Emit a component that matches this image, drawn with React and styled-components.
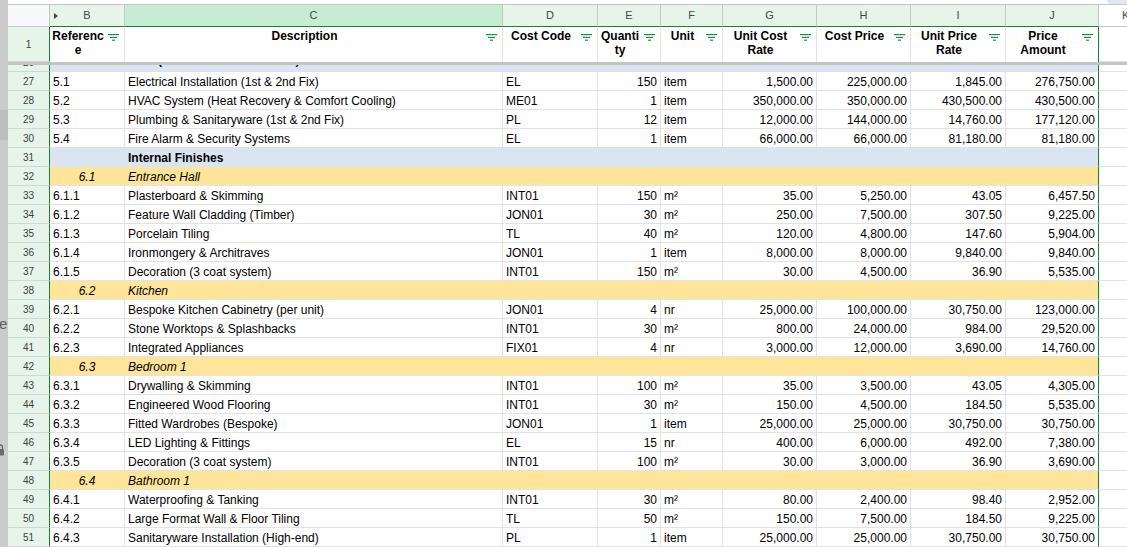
import React from 'react';
import styled, { createGlobalStyle } from 'styled-components';

const GlobalStyle = createGlobalStyle`
  html, body { margin: 0; padding: 0; background: #fff; overflow: hidden; }
  body { font-family: "Liberation Sans", Arial, sans-serif; }
  * { box-sizing: border-box; }
`;

const COLS = '42px 75px 378px 95px 63px 62px 94px 94px 95px 93px minmax(0, 1fr)';
const GRID = '#e2e2e3';
const HEAD_LINE = '#c4c7c5';
const SEL = '#188038';
const SEL_BG = '#e6f4ea';
const ACTIVE_BG = '#c6ecd3';
const BLUE = '#dbe5f1';
const YELLOW = '#ffe599';

const Page = styled.div`
  display: flex;
  width: 1127px;
  height: 547px;
  overflow: hidden;
`;

const SideStrip = styled.div`
  width: 8px;
  flex: none;
  background: #cbcbcb;
  display: flex;
  flex-direction: column;
  overflow: hidden;
`;

const StripBand = styled.div`
  height: 30px;
  margin-top: 110px;
  background: #bdbdbd;
`;

const StripGlyph = styled.div`
  margin-top: 176px;
  margin-left: -1px;
  font-size: 15px;
  line-height: 16px;
  color: #5f5f5f;
`;

const StripLock = styled.svg`
  margin-top: 112px;
  margin-left: -5px;
  flex: none;
`;

const Sheet = styled.div`
  flex: 1;
  min-width: 0;
  display: flex;
  flex-direction: column;
  overflow: hidden;
`;

const TopBar = styled.div`
  height: 5px;
  flex: none;
  border-bottom: 1px solid ${HEAD_LINE};
  display: flex;
  justify-content: flex-end;
`;

const TopPill = styled.div`
  width: 20px;
  height: 4px;
  border-bottom-left-radius: 8px;
  background: #e3e8f0;
`;

const Row = styled.div`
  display: grid;
  grid-template-columns: ${COLS};
  height: ${(p) => p.$h || 19}px;
  flex: none;
`;

const ColHead = styled.div`
  position: relative;
  height: 100%;
  background: ${(p) => p.$bg || '#f8f9fa'};
  border-right: 1px solid ${HEAD_LINE};
  border-bottom: 1px solid ${(p) => (p.$sel ? SEL : HEAD_LINE)};
  color: #444746;
  font-size: 11px;
  line-height: 21px;
  text-align: center;
  overflow: hidden;
  white-space: nowrap;
`;

const EdgeHead = styled.div`
  height: 100%;
  min-width: 0;
  background: #fff;
  border-bottom: 1px solid ${HEAD_LINE};
  color: #444746;
  font-size: 11px;
  line-height: 21px;
  padding-left: 23px;
  overflow: hidden;
  white-space: nowrap;
`;

const HiddenTri = styled.span`
  position: absolute;
  left: 4px;
  top: 8px;
  width: 0;
  height: 0;
  border-top: 3px solid transparent;
  border-bottom: 3px solid transparent;
  border-left: 4px solid #444746;
`;

const RowNum = styled.div`
  height: 100%;
  background: ${SEL_BG};
  border-right: 1px solid ${SEL};
  border-bottom: 1px solid #cfd8d2;
  color: #3c4043;
  font-size: 10px;
  padding-top: 1px;
  display: flex;
  align-items: center;
  justify-content: center;
`;

const HeadCell = styled.div`
  height: 100%;
  display: flex;
  align-items: flex-start;
  padding: 2px 5px 0 2px;
  border-right: 1px solid ${(p) => (p.$selEnd ? SEL : GRID)};
  font-weight: bold;
  font-size: 12px;
  line-height: 14px;
  color: #000;
  background: #fff;
`;

const HeadText = styled.div`
  flex: 1;
  min-width: 0;
  text-align: center;
  overflow-wrap: break-word;
  word-break: break-word;
`;

const FilterSvg = styled.svg`
  flex: none;
  margin-top: 5px;
  margin-left: 4px;
`;

const FreezeBar = styled.div`
  height: 3px;
  flex: none;
  background: #c4c4c4;
`;

const RowClip = styled.div`
  height: 7px;
  flex: none;
  overflow: hidden;
  display: flex;
  flex-direction: column;
  justify-content: flex-end;
`;

const Cell = styled.div`
  height: 100%;
  min-width: 0;
  padding: ${(p) => (p.$clipped ? '0 3px' : '1px 3px 0')};
  font-size: 12px;
  line-height: ${(p) => (p.$clipped ? '15px' : '18px')};
  color: #000;
  white-space: nowrap;
  overflow: hidden;
  background: ${(p) => p.$bg || '#fff'};
  text-align: ${(p) => p.$align || 'left'};
  font-weight: ${(p) => (p.$bold ? 'bold' : 'normal')};
  font-style: ${(p) => (p.$italic ? 'italic' : 'normal')};
  border-right: 1px solid ${(p) => (p.$selEnd ? SEL : p.$bg || GRID)};
  border-bottom: 1px solid ${(p) => p.$bottom || GRID};
`;

const EdgeCell = styled.div`
  height: 100%;
  background: #fff;
  border-bottom: 1px solid ${GRID};
`;

const FilterIcon = () => (
  <FilterSvg width="11" height="7" viewBox="0 0 11 7">
    <rect x="0" y="0" width="11" height="1.2" fill="#1e8e3e" />
    <rect x="2" y="2.8" width="7" height="1.2" fill="#1e8e3e" />
    <rect x="4" y="5.6" width="3" height="1.2" fill="#1e8e3e" />
  </FilterSvg>
);

const LETTERS = ['B', 'C', 'D', 'E', 'F', 'G', 'H', 'I', 'J'];
const HEADERS = [
  'Reference',
  'Description',
  'Cost Code',
  'Quantity',
  'Unit',
  'Unit Cost Rate',
  'Cost Price',
  'Unit Price Rate',
  'Price Amount',
];

const ROWS = [
  { n: 27, t: 'item', d: ['5.1', 'Electrical Installation (1st & 2nd Fix)', 'EL', '150', 'item', '1,500.00', '225,000.00', '1,845.00', '276,750.00'] },
  { n: 28, t: 'item', d: ['5.2', 'HVAC System (Heat Recovery & Comfort Cooling)', 'ME01', '1', 'item', '350,000.00', '350,000.00', '430,500.00', '430,500.00'] },
  { n: 29, t: 'item', d: ['5.3', 'Plumbing & Sanitaryware (1st & 2nd Fix)', 'PL', '12', 'item', '12,000.00', '144,000.00', '14,760.00', '177,120.00'] },
  { n: 30, t: 'item', d: ['5.4', 'Fire Alarm & Security Systems', 'EL', '1', 'item', '66,000.00', '66,000.00', '81,180.00', '81,180.00'] },
  { n: 31, t: 'section', title: 'Internal Finishes' },
  { n: 32, t: 'sub', ref: '6.1', title: 'Entrance Hall' },
  { n: 33, t: 'item', d: ['6.1.1', 'Plasterboard & Skimming', 'INT01', '150', 'm²', '35.00', '5,250.00', '43.05', '6,457.50'] },
  { n: 34, t: 'item', d: ['6.1.2', 'Feature Wall Cladding (Timber)', 'JON01', '30', 'm²', '250.00', '7,500.00', '307.50', '9,225.00'] },
  { n: 35, t: 'item', d: ['6.1.3', 'Porcelain Tiling', 'TL', '40', 'm²', '120.00', '4,800.00', '147.60', '5,904.00'] },
  { n: 36, t: 'item', d: ['6.1.4', 'Ironmongery & Architraves', 'JON01', '1', 'item', '8,000.00', '8,000.00', '9,840.00', '9,840.00'] },
  { n: 37, t: 'item', d: ['6.1.5', 'Decoration (3 coat system)', 'INT01', '150', 'm²', '30.00', '4,500.00', '36.90', '5,535.00'] },
  { n: 38, t: 'sub', ref: '6.2', title: 'Kitchen' },
  { n: 39, t: 'item', d: ['6.2.1', 'Bespoke Kitchen Cabinetry (per unit)', 'JON01', '4', 'nr', '25,000.00', '100,000.00', '30,750.00', '123,000.00'] },
  { n: 40, t: 'item', d: ['6.2.2', 'Stone Worktops & Splashbacks', 'INT01', '30', 'm²', '800.00', '24,000.00', '984.00', '29,520.00'] },
  { n: 41, t: 'item', d: ['6.2.3', 'Integrated Appliances', 'FIX01', '4', 'nr', '3,000.00', '12,000.00', '3,690.00', '14,760.00'] },
  { n: 42, t: 'sub', ref: '6.3', title: 'Bedroom 1' },
  { n: 43, t: 'item', d: ['6.3.1', 'Drywalling & Skimming', 'INT01', '100', 'm²', '35.00', '3,500.00', '43.05', '4,305.00'] },
  { n: 44, t: 'item', d: ['6.3.2', 'Engineered Wood Flooring', 'INT01', '30', 'm²', '150.00', '4,500.00', '184.50', '5,535.00'] },
  { n: 45, t: 'item', d: ['6.3.3', 'Fitted Wardrobes (Bespoke)', 'JON01', '1', 'item', '25,000.00', '25,000.00', '30,750.00', '30,750.00'] },
  { n: 46, t: 'item', d: ['6.3.4', 'LED Lighting & Fittings', 'EL', '15', 'nr', '400.00', '6,000.00', '492.00', '7,380.00'] },
  { n: 47, t: 'item', d: ['6.3.5', 'Decoration (3 coat system)', 'INT01', '100', 'm²', '30.00', '3,000.00', '36.90', '3,690.00'] },
  { n: 48, t: 'sub', ref: '6.4', title: 'Bathroom 1' },
  { n: 49, t: 'item', d: ['6.4.1', 'Waterproofing & Tanking', 'INT01', '30', 'm²', '80.00', '2,400.00', '98.40', '2,952.00'] },
  { n: 50, t: 'item', d: ['6.4.2', 'Large Format Wall & Floor Tiling', 'TL', '50', 'm²', '150.00', '7,500.00', '184.50', '9,225.00'] },
  { n: 51, t: 'item', d: ['6.4.3', 'Sanitaryware Installation (High-end)', 'PL', '1', 'item', '25,000.00', '25,000.00', '30,750.00', '30,750.00'] },
];

const ALIGN = ['left', 'left', 'left', 'right', 'left', 'right', 'right', 'right', 'right'];

const ItemRow = ({ n, d }) => (
  <Row>
    <RowNum>{n}</RowNum>
    {d.map((v, i) => (
      <Cell key={i} $align={ALIGN[i]} $selEnd={i === 8}>
        {v}
      </Cell>
    ))}
    <EdgeCell />
  </Row>
);

const BandRow = ({ n, bg, bottom, refText, title, bold, italic, clipped }) => (
  <Row>
    <RowNum>{n}</RowNum>
    <Cell $bg={bg} $bottom={bottom} $align="center" $italic={italic} $clipped={clipped}>
      {refText}
    </Cell>
    <Cell $bg={bg} $bottom={bottom} $bold={bold} $italic={italic} $clipped={clipped}>
      {title}
    </Cell>
    {[0, 1, 2, 3, 4, 5, 6].map((i) => (
      <Cell key={i} $bg={bg} $bottom={bottom} $selEnd={i === 6} />
    ))}
    <EdgeCell />
  </Row>
);

export default function App() {
  return (
    <Page>
      <GlobalStyle />
      <SideStrip>
        <StripBand />
        <StripGlyph>e</StripGlyph>
        <StripLock width="10" height="12" viewBox="0 0 10 12">
          <path d="M2.5 5V3.5a2.5 2.5 0 0 1 5 0V5" fill="none" stroke="#6b6b6b" strokeWidth="1.4" />
          <rect x="1" y="5" width="8" height="6.5" rx="1" fill="#6b6b6b" />
        </StripLock>
      </SideStrip>
      <Sheet>
        <TopBar>
          <TopPill />
        </TopBar>
        <Row $h={22}>
          <ColHead />
          {LETTERS.map((l) => (
            <ColHead key={l} $sel $bg={l === 'C' ? ACTIVE_BG : SEL_BG}>
              {l === 'B' && <HiddenTri />}
              {l}
            </ColHead>
          ))}
          <EdgeHead>K</EdgeHead>
        </Row>
        <Row $h={35}>
          <RowNum>1</RowNum>
          {HEADERS.map((h, i) => (
            <HeadCell key={h} $selEnd={i === 8}>
              <HeadText>{h}</HeadText>
              <FilterIcon />
            </HeadCell>
          ))}
          <EdgeCell />
        </Row>
        <FreezeBar />
        <RowClip>
          <BandRow n={26} bg={BLUE} bottom={GRID} title="M&E (Mechanical & Electrical)" bold clipped />
        </RowClip>
        {ROWS.map((r) =>
          r.t === 'item' ? (
            <ItemRow key={r.n} n={r.n} d={r.d} />
          ) : r.t === 'section' ? (
            <BandRow key={r.n} n={r.n} bg={BLUE} bottom={BLUE} title={r.title} bold />
          ) : (
            <BandRow key={r.n} n={r.n} bg={YELLOW} bottom={GRID} refText={r.ref} title={r.title} italic />
          )
        )}
      </Sheet>
    </Page>
  );
}
